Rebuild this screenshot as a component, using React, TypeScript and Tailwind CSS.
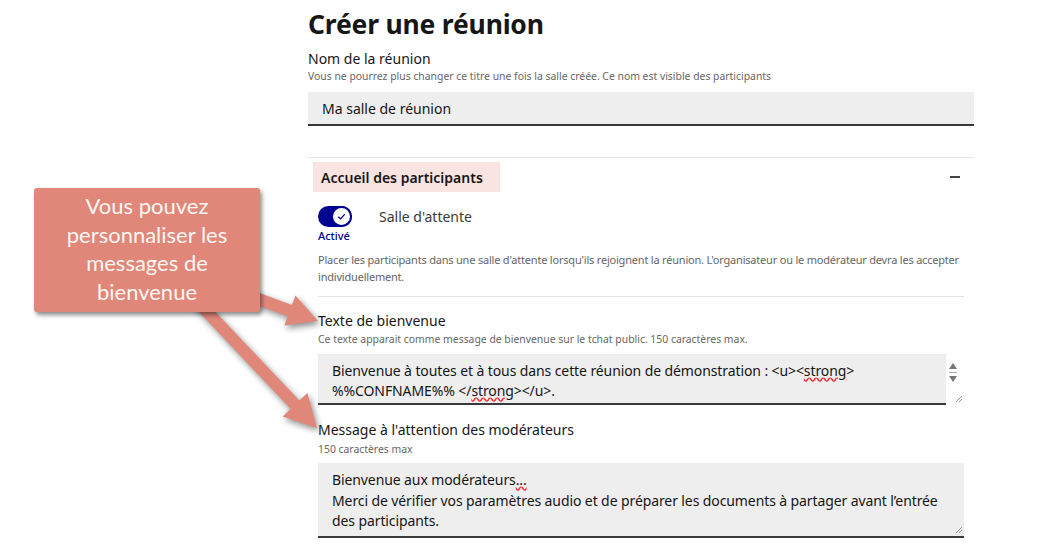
const font = { fontFamily: "'Noto Sans', 'Open Sans', sans-serif" };

// arrow polygon from start to tip
function arrow(x1: number, y1: number, x2: number, y2: number, shaft: number, headW: number, headL: number) {
  const dx = x2 - x1;
  const dy = y2 - y1;
  const len = Math.hypot(dx, dy);
  const ux = dx / len;
  const uy = dy / len;
  const nx = -uy;
  const ny = ux;
  const bx = x2 - ux * headL;
  const by = y2 - uy * headL;
  const pts = [
    [x1 + nx * shaft / 2, y1 + ny * shaft / 2],
    [bx + nx * shaft / 2, by + ny * shaft / 2],
    [bx + nx * headW / 2, by + ny * headW / 2],
    [x2, y2],
    [bx - nx * headW / 2, by - ny * headW / 2],
    [bx - nx * shaft / 2, by - ny * shaft / 2],
    [x1 - nx * shaft / 2, y1 - ny * shaft / 2],
  ];
  return pts.map((p) => p.join(",")).join(" ");
}

function Callout() {
  return (
    <div className="absolute inset-0 pointer-events-none">
      <svg width="1058" height="545" className="absolute inset-0" style={{ filter: "drop-shadow(2px 3px 3px rgba(0,0,0,0.45))" }}>
        <polygon points={arrow(240, 292, 318, 321, 12, 32, 30)} fill="#e0877a" />
        <polygon points={arrow(196, 300, 317, 428, 12, 34, 32)} fill="#e0877a" />
      </svg>
      <div className="absolute left-[34px] top-[188px] w-[226px] h-[124px] rounded-[3px] bg-[#e0877a] shadow-[2px_3px_4px_rgba(0,0,0,0.45)] flex items-center justify-center text-center text-[#fdf6f2] text-[22px] leading-[28.5px]" style={{ fontFamily: "Lato, 'Noto Sans', sans-serif" }}>
        <div className="pb-[2px]">
          Vous pouvez
          <br />
          personnaliser les
          <br />
          messages de
          <br />
          bienvenue
        </div>
      </div>
    </div>
  );
}

function Spinner() {
  return (
    <div className="flex flex-col items-center gap-[3px] pt-[9px] w-[14px]">
      <div className="w-0 h-0 border-l-[4px] border-r-[4px] border-b-[6px] border-l-transparent border-r-transparent border-b-[#777]" />
      <div className="w-[8px] h-px bg-[#aaa]" />
      <div className="w-0 h-0 border-l-[4px] border-r-[4px] border-t-[6px] border-l-transparent border-r-transparent border-t-[#777]" />
    </div>
  );
}

function Grip() {
  return (
    <svg width="8" height="8" viewBox="0 0 8 8" className="absolute right-[1px] bottom-[2px]">
      <path d="M7 1 L1 7 M7 4 L4 7" stroke="#999" strokeWidth="1" />
    </svg>
  );
}

export default function App() {
  return (
    <div className="relative w-[1058px] h-[545px] bg-white overflow-hidden text-[#161616]" style={font}>
      <div className="ml-[308px] w-[666px] pt-[6px]">
        <h1 className="text-[26.5px] leading-[36px] font-bold tracking-[-0.2px]">Créer une réunion</h1>

        <div className="mt-[8px] text-[14px] leading-[18px]">Nom de la réunion</div>
        <div className="mt-[1px] text-[10.4px] leading-[14px] text-[#666]">
          Vous ne pourrez plus changer ce titre une fois la salle créée. Ce nom est visible des participants
        </div>
        <div className="mt-[9px] h-[34px] bg-[#eeeeee] border-b-2 border-[#3a3a3a] flex items-center px-[14px] text-[14px]">
          Ma salle de réunion
        </div>

        <div className="mt-[31px] border-t border-[#e5e5e5]" />

        <div className="flex items-center justify-between pt-[4px]">
          <div className="ml-[5px] h-[30px] w-[187px] bg-[#f9e4e1] flex items-center px-[8px] text-[14px] font-semibold">
            Accueil des participants
          </div>
          <div className="w-[10px] h-[2px] bg-[#444] mr-[14px]" />
        </div>

        <div className="pl-[10px] pr-[10px]">
          <div className="flex items-start mt-[14px]">
            <div className="flex flex-col items-start w-[61px]">
              <div className="w-[34px] h-[21px] rounded-full bg-[#000091] relative">
                <div className="absolute right-0 top-0 w-[21px] h-[21px] rounded-full bg-white border-2 border-[#000091] flex items-center justify-center">
                  <svg width="11" height="11" viewBox="0 0 12 12">
                    <path d="M2.5 6.2 L5 8.6 L9.6 3.4" fill="none" stroke="#000091" strokeWidth="1.4" />
                  </svg>
                </div>
              </div>
              <div className="text-[11px] leading-[14px] text-[#000091] mt-[2px] font-medium">Activé</div>
            </div>
            <div className="text-[14px] text-[#3a3a3a] leading-[20px] pt-[1px]">Salle d'attente</div>
          </div>

          <p className="mt-[8px] text-[11px] leading-[17px] text-[#666] tracking-[-0.2px]">
            Placer les participants dans une salle d'attente lorsqu'ils rejoignent la réunion. L'organisateur ou le modérateur devra les accepter individuellement.
          </p>

          <div className="mt-[11px] border-t border-[#e5e5e5]" />

          <div className="mt-[15px] text-[14px] leading-[18px]">Texte de bienvenue</div>
          <div className="mt-[2px] text-[10.4px] leading-[14px] text-[#666]">
            Ce texte apparait comme message de bienvenue sur le tchat public. 150 caractères max.
          </div>
          <div className="mt-[8px] flex items-stretch relative">
            <div className="w-[628px] h-[51px] bg-[#eeeeee] border-b-2 border-[#3a3a3a] px-[14px] pt-[7px] text-[14px] leading-[20px] tracking-[-0.1px]">
              Bienvenue à toutes et à tous dans cette réunion de démonstration : &lt;u&gt;&lt;
              <span className="underline decoration-wavy decoration-red-500">strong</span>&gt;
              <br />
              %%CONFNAME%% &lt;/<span className="underline decoration-wavy decoration-red-500">strong</span>&gt;&lt;/u&gt;.
            </div>
            <div className="w-[18px] relative bg-white">
              <Spinner />
              <Grip />
            </div>
          </div>

          <div className="mt-[16px] text-[14px] leading-[18px]">Message à l'attention des modérateurs</div>
          <div className="mt-[3px] text-[10.4px] leading-[14px] text-[#666]">150 caractères max</div>
          <div className="mt-[7px] relative h-[75px] bg-[#eeeeee] border-b-2 border-[#3a3a3a] px-[14px] pt-[7px] text-[14px] leading-[20.5px] tracking-[-0.1px]">
            Bienvenue aux modérateurs<span className="underline decoration-wavy decoration-red-500">...</span>
            <br />
            Merci de vérifier vos paramètres audio et de préparer les documents à partager avant l’entrée des participants.
            <Grip />
          </div>
        </div>
      </div>

      <Callout />
    </div>
  );
}
